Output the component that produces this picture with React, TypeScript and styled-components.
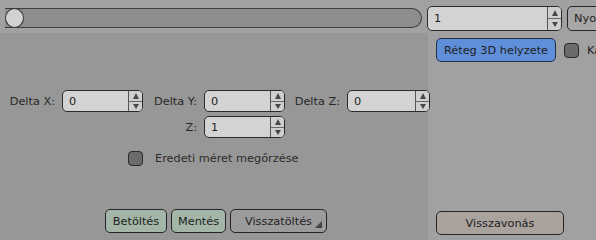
import React from "react";
import styled, { createGlobalStyle } from "styled-components";

const GlobalStyle = createGlobalStyle`
  html, body {
    margin: 0;
    padding: 0;
    background: #979797;
  }
  body {
    font-family: "DejaVu Sans", "Liberation Sans", sans-serif;
    font-size: 11.3px;
    color: #222;
  }
`;

const Screen = styled.div`
  width: 596px;
  height: 240px;
  display: flex;
  flex-direction: column;
  overflow: hidden;
`;

const TopBar = styled.div`
  height: 33px;
  flex: none;
  background: #a1a1a1;
  display: flex;
  align-items: flex-start;
  gap: 5px;
  padding: 6px 0 0 5px;
  box-sizing: border-box;
`;

const SliderTrack = styled.div`
  width: 417px;
  height: 20px;
  margin-top: 2px;
  box-sizing: border-box;
  position: relative;
  background: #8d8d8d;
  border: 1px solid #3d3d3d;
  border-left: none;
  border-radius: 0 10px 10px 0;
  flex: none;
`;

const SliderHandle = styled.div`
  position: absolute;
  left: 0;
  top: -1px;
  width: 19px;
  height: 20px;
  box-sizing: border-box;
  border-radius: 50%;
  background: #d2d2d2;
  border: 1px solid #333;
`;

const Body = styled.div`
  flex: 1;
  display: flex;
`;

const LeftPanel = styled.div`
  width: 428px;
  flex: none;
  background: #979797;
  display: flex;
  flex-direction: column;
  position: relative;
  z-index: 1;
`;

const RightPanel = styled.div`
  flex: 1;
  background: #a1a1a1;
  display: flex;
  flex-direction: column;
  justify-content: space-between;
  padding: 5px 0 5px 8px;
`;

const SpinFrame = styled.div<{ $w: number; $h: number }>`
  width: ${(p) => p.$w}px;
  height: ${(p) => p.$h}px;
  box-sizing: border-box;
  display: flex;
  border: 1px solid #2b2b2b;
  border-radius: 5px;
  background: #d3d3d3;
  overflow: hidden;
  flex: none;
`;

const SpinValue = styled.div`
  flex: 1;
  display: flex;
  align-items: center;
  padding-left: 6px;
  color: #1e1e1e;
`;

const SpinButtons = styled.div`
  width: 13px;
  display: flex;
  flex-direction: column;
  border-left: 1px solid #555;
  background: #cfcfcf;
`;

const SpinArrow = styled.div<{ $down?: boolean }>`
  flex: 1;
  display: flex;
  align-items: center;
  justify-content: center;
  border-top: ${(p) => (p.$down ? "1px solid #666" : "none")};
  &::after {
    content: "";
    border-left: 3.5px solid transparent;
    border-right: 3.5px solid transparent;
    ${(p) =>
      p.$down
        ? "border-top: 5px solid #484848;"
        : "border-bottom: 6px solid #484848;"}
  }
`;

const SpinBox = ({ value, w, h }: { value: string; w: number; h: number }) => (
  <SpinFrame $w={w} $h={h}>
    <SpinValue>{value}</SpinValue>
    <SpinButtons>
      <SpinArrow />
      <SpinArrow $down />
    </SpinButtons>
  </SpinFrame>
);

const PushButton = styled.button<{ $bg: string; $w: number }>`
  width: ${(p) => p.$w}px;
  height: 24px;
  box-sizing: border-box;
  border: 1px solid #252525;
  border-radius: 5px;
  background: ${(p) => p.$bg};
  font-family: inherit;
  font-size: 11.3px;
  color: #1e1e1e;
  padding: 0;
  position: relative;
  flex: none;
  white-space: nowrap;
`;

const MenuCorner = styled.span`
  position: absolute;
  right: 4px;
  bottom: 4px;
  border-left: 7px solid transparent;
  border-bottom: 7px solid #444;
`;

const DeltaGrid = styled.div`
  margin-top: 57px;
  display: grid;
  grid-template-columns: 55px 81px 47px 81px 48px 83px;
  grid-auto-rows: 22px;
  column-gap: 7px;
  row-gap: 4px;
`;

const FieldLabel = styled.div<{ $col?: number }>`
  grid-column: ${(p) => p.$col ?? "auto"};
  display: flex;
  align-items: center;
  justify-content: flex-end;
  white-space: nowrap;
  color: #282828;
`;

const Cell = styled.div<{ $col?: number }>`
  grid-column: ${(p) => p.$col ?? "auto"};
`;

const CheckRow = styled.div<{ $indent: number; $top: number }>`
  display: flex;
  align-items: center;
  gap: 12px;
  margin-top: ${(p) => p.$top}px;
  padding-left: ${(p) => p.$indent}px;
  color: #2a2a2a;
  white-space: nowrap;
`;

const CheckBox = styled.span`
  width: 15px;
  height: 15px;
  box-sizing: border-box;
  border: 1px solid #2a2a2a;
  border-radius: 4px;
  background: #6b6b6b;
  flex: none;
`;

const ButtonRow = styled.div`
  margin-top: auto;
  margin-bottom: 7px;
  display: flex;
  justify-content: center;
  gap: 4px;
  padding-left: 4px;
`;

const TopRow = styled.div`
  display: flex;
  align-items: center;
  gap: 8px;
`;

export default function App() {
  return (
    <>
      <GlobalStyle />
      <Screen>
        <TopBar>
          <SliderTrack>
            <SliderHandle />
          </SliderTrack>
          <SpinBox value="1" w={135} h={25} />
          <PushButton $bg="#a7a7a7" $w={60} style={{ height: 25, textAlign: "left", paddingLeft: 6 }}>
            Nyomtatás
          </PushButton>
        </TopBar>
        <Body>
          <LeftPanel>
            <DeltaGrid>
              <FieldLabel>Delta X:</FieldLabel>
              <SpinBox value="0" w={81} h={22} />
              <FieldLabel>Delta Y:</FieldLabel>
              <SpinBox value="0" w={81} h={22} />
              <FieldLabel>Delta Z:</FieldLabel>
              <SpinBox value="0" w={83} h={22} />
              <FieldLabel $col={3}>Z:</FieldLabel>
              <Cell $col={4}>
                <SpinBox value="1" w={81} h={22} />
              </Cell>
            </DeltaGrid>
            <CheckRow $indent={128} $top={13}>
              <CheckBox />
              Eredeti méret megőrzése
            </CheckRow>
            <ButtonRow>
              <PushButton $bg="#a3b6a7" $w={62}>Betöltés</PushButton>
              <PushButton $bg="#a3b6a7" $w={55}>Mentés</PushButton>
              <PushButton $bg="#9b9b9b" $w={97}>
                Visszatöltés
                <MenuCorner />
              </PushButton>
            </ButtonRow>
          </LeftPanel>
          <RightPanel>
            <TopRow>
              <PushButton $bg="#5f8fd9" $w={120} style={{ borderColor: "#26324a" }}>
                Réteg 3D helyzete
              </PushButton>
              <CheckBox />
              <span>Kamera</span>
            </TopRow>
            <PushButton $bg="#aaa29d" $w={128}>
              Visszavonás
            </PushButton>
          </RightPanel>
        </Body>
      </Screen>
    </>
  );
}
